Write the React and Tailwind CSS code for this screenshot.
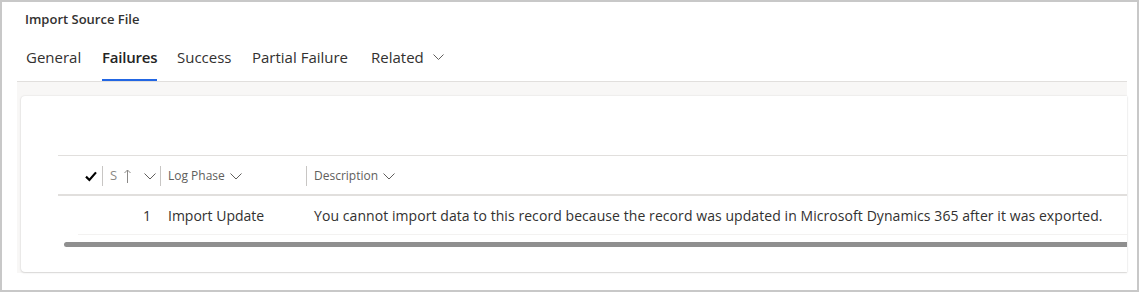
const Chevron = ({ className = "" }) => (
  <svg width="12" height="7" viewBox="0 0 12 7" className={className} fill="none">
    <polyline points="0.5,0.5 6,6 11.5,0.5" stroke="#605e5c" strokeWidth="1" />
  </svg>
);

const Sep = () => <div className="w-px h-[20px] bg-[#c8c6c4] shrink-0" />;

function Tab({ label, width, active, withChevron }) {
  return (
    <div className={`h-[43px] shrink-0 ${width}`}>
      <div className="inline-flex flex-col h-full justify-between">
        <span
          className={`pt-[9px] leading-[20px] text-[15px] flex items-center gap-[9px] ${
            active ? "font-semibold text-[#242424] tracking-[-0.2px]" : "text-[#323130]"
          }`}
        >
          {label}
          {withChevron && (
            <svg width="11" height="6" viewBox="0 0 11 6" fill="none">
              <polyline points="0.5,0.5 5.5,5.5 10.5,0.5" stroke="#605e5c" strokeWidth="1" />
            </svg>
          )}
        </span>
        <div className={`h-[2px] ${active ? "bg-[#2266e3]" : "bg-transparent"}`} />
      </div>
    </div>
  );
}

export default function App() {
  return (
    <div className="w-[1139px] h-[292px] border-2 border-[#c8c8c8] bg-white overflow-hidden font-['Open_Sans',sans-serif]">
      {/* Title */}
      <div className="h-[36px] flex items-center pl-[23px] text-[13px] font-semibold text-[#323130]">
        Import Source File
      </div>

      {/* Tabs */}
      <div className="ml-[15px] mr-[10px] pl-[9px] flex border-b border-[#e1dfdd]">
        <Tab label="General" width="w-[76px]" />
        <Tab label="Failures" width="w-[75px]" active />
        <Tab label="Success" width="w-[75px]" />
        <Tab label="Partial Failure" width="w-[119px]" />
        <Tab label="Related" width="w-[100px]" withChevron />
      </div>

      {/* Content area */}
      <div className="ml-[15px] mr-[10px] bg-[#f8f7f6] pt-[14px] pl-[4px] pb-px">
        <div className="h-[176px] bg-white rounded-l-[4px] shadow-[0_0_2px_rgba(0,0,0,0.12),0_1px_2px_rgba(0,0,0,0.1)] overflow-hidden pt-[59px]">
          <div className="ml-[37px] border-t border-[#e1dfdd]">
            {/* Header row */}
            <div className="h-[40px] pt-[2px] flex items-center border-b-2 border-[#e1dfdd] text-[12px] text-[#605e5c]">
              <div className="w-[44px] flex justify-end pr-[5px]">
                <svg width="12" height="11" viewBox="0 0 12 11" fill="none">
                  <path d="M1 5.6 L4.4 9 L11 1.4" stroke="#000" strokeWidth="2.2" />
                </svg>
              </div>
              <Sep />
              <div className="w-[57px] flex items-center pl-[7px] pr-[4px]">
                <span className="text-[#8a8886] text-[13px]">S</span>
                <svg width="7" height="14" viewBox="0 0 7 14" fill="none" className="ml-[7px]">
                  <path d="M3.5 14 V1 M0.5 4 L3.5 1 L6.5 4" stroke="#8a8886" strokeWidth="1" />
                </svg>
                <Chevron className="ml-auto" />
              </div>
              <Sep />
              <div className="w-[145px] flex items-center gap-[5px] pl-[7px]">
                Log Phase
                <Chevron />
              </div>
              <Sep />
              <div className="flex-1 flex items-center gap-[5px] pl-[7px]">
                Description
                <Chevron />
              </div>
            </div>

            {/* Data row */}
            <div className="ml-[20px] h-[39px] flex items-center border-b border-[#f3f2f1] text-[14px] text-[#323130] whitespace-nowrap">
              <div className="w-[25px]" />
              <div className="w-[58px] text-right pr-[10px]">1</div>
              <div className="w-[146px] pl-[7px]">Import Update</div>
              <div className="flex-1 pl-[7px] tracking-[0.07px]">
                You cannot import data to this record because the record was updated in Microsoft Dynamics 365 after it was exported.
              </div>
            </div>

            {/* Horizontal scrollbar */}
            <div className="ml-[6px] mt-[7px] h-[5px] bg-[#8f8f8f] rounded-l-full" />
          </div>
        </div>
      </div>
    </div>
  );
}
